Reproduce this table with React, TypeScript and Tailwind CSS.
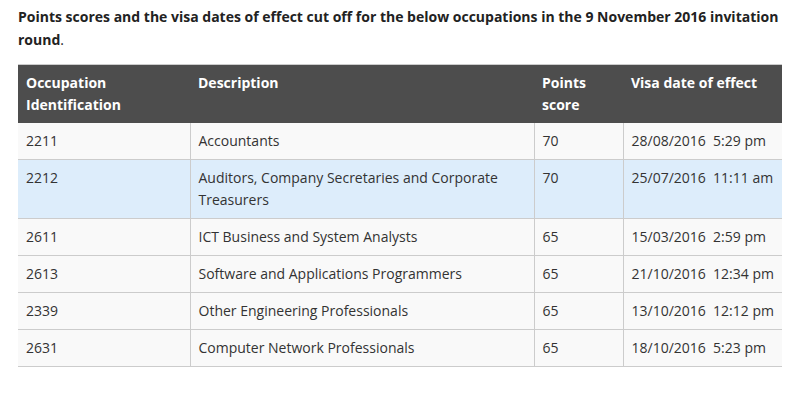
import React from "react";

const rows = [
  { id: "2211", desc: "Accountants", pts: "70", date: "28/08/2016  5:29 pm", hl: false },
  { id: "2212", desc: "Auditors, Company Secretaries and Corporate Treasurers", pts: "70", date: "25/07/2016  11:11 am", hl: true },
  { id: "2611", desc: "ICT Business and System Analysts", pts: "65", date: "15/03/2016  2:59 pm", hl: false },
  { id: "2613", desc: "Software and Applications Programmers", pts: "65", date: "21/10/2016  12:34 pm", hl: false },
  { id: "2339", desc: "Other Engineering Professionals", pts: "65", date: "13/10/2016  12:12 pm", hl: false },
  { id: "2631", desc: "Computer Network Professionals", pts: "65", date: "18/10/2016  5:23 pm", hl: false },
];

export default function App() {
  return (
    <div
      className="w-[790px] h-[413px] bg-white px-[18px] pt-[5px] text-[14px] text-[#333]"
      style={{ fontFamily: '"Open Sans", "Liberation Sans", sans-serif' }}
    >
      <p className="font-bold leading-[23px] text-[#222] w-[764px]">
        Points scores and the visa dates of effect cut off for the below occupations in the 9 November 2016 invitation round<span className="font-normal">.</span>
      </p>
      <table className="mt-[13px] w-[764px] table-fixed border-collapse border-t border-[#cccccc] leading-[22px]">
        <colgroup>
          <col className="w-[172px]" />
          <col className="w-[344px]" />
          <col className="w-[89px]" />
          <col className="w-[159px]" />
        </colgroup>
        <thead>
          <tr className="bg-[#4d4d4d] text-white font-bold text-left align-top">
            <th className="px-2 py-[7px] font-bold">Occupation Identification</th>
            <th className="px-2 py-[7px] font-bold">Description</th>
            <th className="px-2 py-[7px] font-bold">Points score</th>
            <th className="px-2 py-[7px] font-bold">Visa date of effect</th>
          </tr>
        </thead>
        <tbody>
          {rows.map((r) => (
            <tr
              key={r.id}
              className={`${r.hl ? "bg-[#ddedfb]" : "bg-[#f9f9f9]"} border-b border-[#cccccc] align-top`}
            >
              <td className="px-2 py-[7px]">{r.id}</td>
              <td className="px-2 py-[7px] border-l border-[#cccccc]">{r.desc}</td>
              <td className="px-2 py-[7px] border-l border-[#cccccc]">{r.pts}</td>
              <td className="px-2 py-[7px] border-l border-[#cccccc] whitespace-pre">{r.date}</td>
            </tr>
          ))}
        </tbody>
      </table>
    </div>
  );
}
